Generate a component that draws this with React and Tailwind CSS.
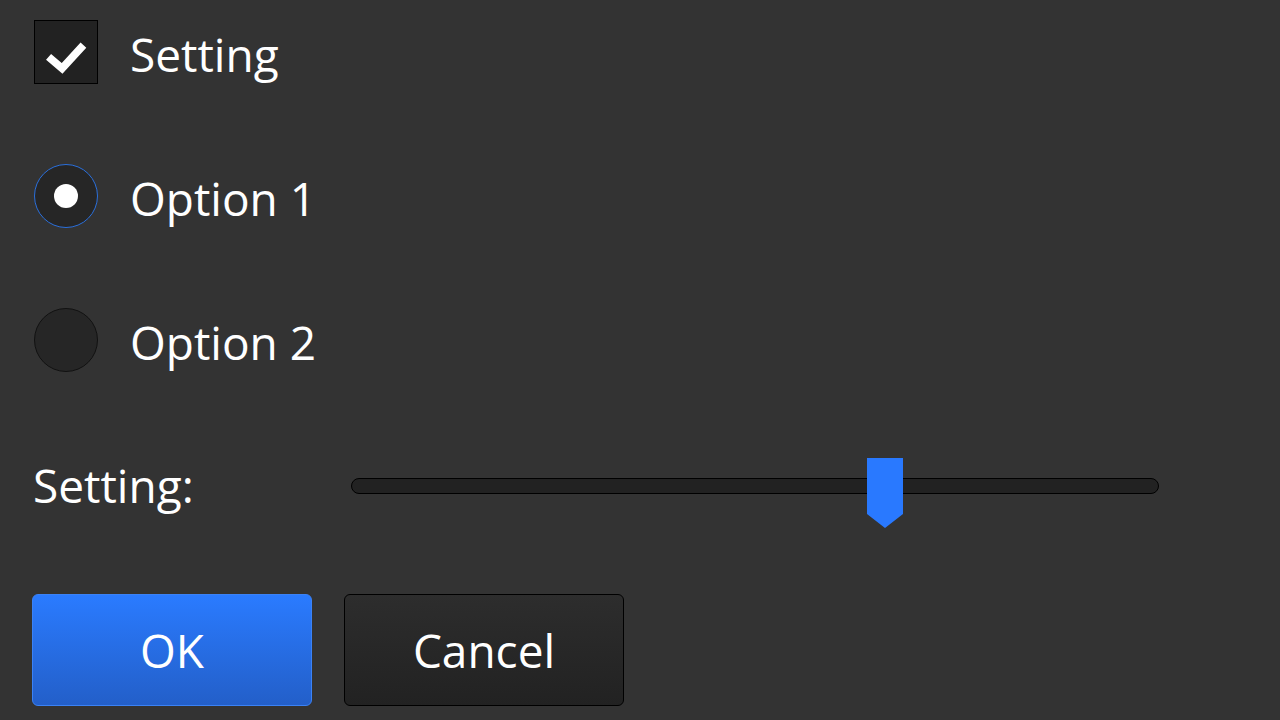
import { useState } from "react";

const FONT = "font-['Open_Sans','Noto_Sans',sans-serif]";

const Checkbox = ({ checked, label, onChange }) => (
  <button type="button" onClick={onChange} className="flex items-center h-16 gap-[32px] text-left">
    <span className="w-16 h-16 bg-[#222222] border border-black flex items-center justify-center shrink-0">
      {checked && (
        <svg width="64" height="64" viewBox="0 0 64 64">
          <path d="M14 37 L28 49 L50 25" fill="none" stroke="#fff" strokeWidth="8" strokeLinejoin="miter" />
        </svg>
      )}
    </span>
    <span className="text-[46px] text-white leading-none mt-[3px]">{label}</span>
  </button>
);

const Radio = ({ selected, label, onSelect }) => (
  <button type="button" onClick={onSelect} className="flex items-center h-16 gap-[32px] text-left">
    <span
      className={`w-16 h-16 rounded-full bg-[#262626] border flex items-center justify-center shrink-0 ${
        selected ? "border-[#2a6fdb]" : "border-[#111111]"
      }`}
    >
      {selected && <span className="w-6 h-6 rounded-full bg-white" />}
    </span>
    <span className="text-[46px] text-white leading-none mt-[3px]">{label}</span>
  </button>
);

const Slider = ({ value }) => (
  <div className="relative w-[808px] h-[70px]">
    <div className="absolute left-0 right-0 top-[20px] h-4 rounded-full bg-[#222222] border border-black" />
    <svg
      className="absolute top-0"
      style={{ left: `${value * 808 - 17}px` }}
      width="36"
      height="70"
      viewBox="0 0 36 70"
    >
      <path d="M0 0 H36 V56 L18 70 L0 56 Z" fill="#2979ff" />
    </svg>
  </div>
);

export default function App() {
  const [checked, setChecked] = useState(true);
  const [option, setOption] = useState(1);

  return (
    <div className={`w-[1280px] h-[720px] bg-[#333333] overflow-hidden ${FONT}`}>
      <div className="flex flex-col pl-[34px] pt-5">
        <Checkbox checked={checked} label="Setting" onChange={() => setChecked(!checked)} />
        <div className="mt-20">
          <Radio selected={option === 1} label="Option 1" onSelect={() => setOption(1)} />
        </div>
        <div className="mt-20">
          <Radio selected={option === 2} label="Option 2" onSelect={() => setOption(2)} />
        </div>

        <div className="mt-[86px] flex items-center">
          <span className="w-[318px] text-[46px] text-white leading-none -ml-px mb-[16px]">Setting:</span>
          <Slider value={0.66} />
        </div>

        <div className="mt-[66px] flex gap-8 -ml-[2px]">
          <button
            type="button"
            className="w-[280px] h-[112px] rounded-md border border-[#3b82f6] bg-gradient-to-b from-[#2a7bff] to-[#235fc9] text-white text-[46px]"
          >
            OK
          </button>
          <button
            type="button"
            className="w-[280px] h-[112px] rounded-md border border-black bg-gradient-to-b from-[#2d2d2d] to-[#222222] text-white text-[46px]"
          >
            Cancel
          </button>
        </div>
      </div>
    </div>
  );
}
